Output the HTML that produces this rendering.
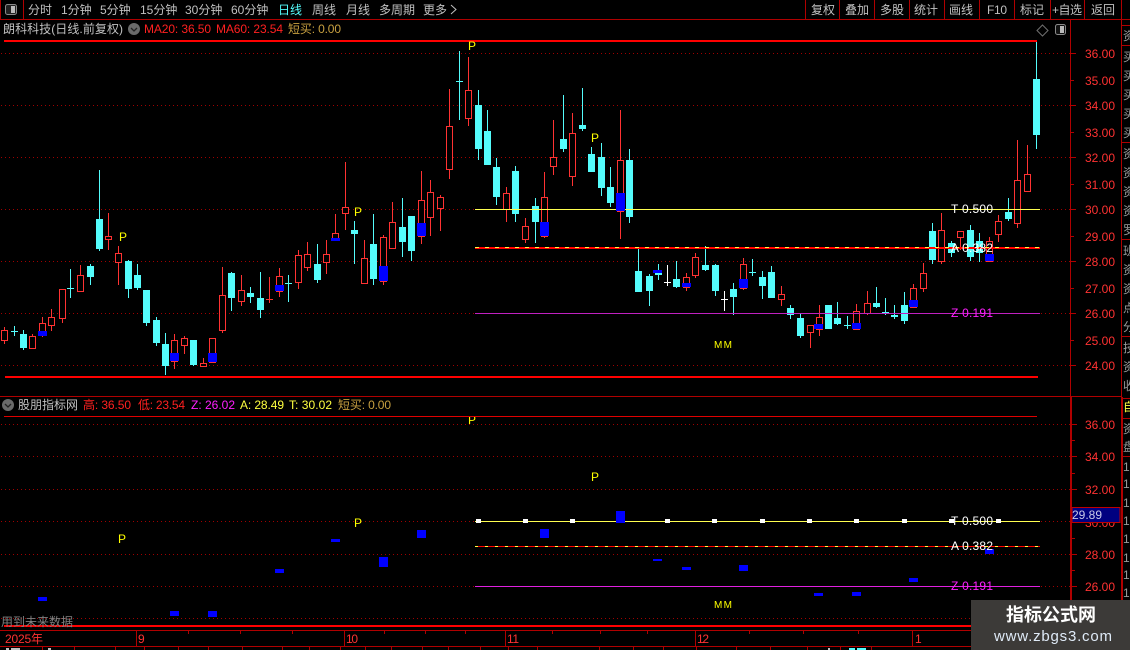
<!DOCTYPE html>
<html>
<head>
<meta charset="utf-8">
<style>
html,body{margin:0;padding:0;background:#000;width:1130px;height:650px;overflow:hidden}
svg{display:block;position:absolute;left:0;top:0}
text{font-family:"Liberation Sans","WenQuanYi Zen Hei","Noto Sans CJK SC",sans-serif;font-size:12px;fill:#c0c0c0}
.ax{fill:#ff3232}
.cj{font-family:"WenQuanYi Zen Hei","Noto Sans CJK SC",sans-serif}
</style>
</head>
<body>
<svg width="1130" height="650" viewBox="0 0 1130 650" xmlns="http://www.w3.org/2000/svg">
<defs><clipPath id="lp"><rect x="0" y="417" width="1070" height="210"/></clipPath></defs>
<rect width="1130" height="650" fill="#000"/>
<g shape-rendering="crispEdges">
<!-- frames -->
<path d="M0.5 0V19M0 19.5H1130M0 396.5H1121M0 630.5H971M0 646.5H971M23.5 0V19M805.5 0V19M839.5 0V19M874.5 0V19M909.5 0V19M944.5 0V19M979.5 0V19M1014.5 0V19M1050.5 0V19M1084.5 0V19M1070.5 19V397M1121.5 0V650M1121 25.5H1130M1121 45.5H1130M1121 142.5H1130M1121 239.5H1130M1121 336.5H1130M1121 398.5H1130M1121 418.5H1130M1121 456.5H1130M136.5 630V646M344.5 630V646M505.5 630V646M695.5 630V646M912.5 630V646M188.5 630V634M240.5 630V634M292.5 630V634M384.5 630V634M425.5 630V634M465.5 630V634M552.5 630V634M600.5 630V634M647.5 630V634M749.5 630V634M803.5 630V634M858.5 630V634M42.5 646V650M74.5 646V650M115.5 646V650M144.5 646V650M178.5 646V650M208.5 646V650M242.5 646V650M282.5 646V650M309.5 646V650M340.5 646V650M365.5 646V650M391.5 646V650M422.5 646V650M448.5 646V650M480.5 646V650M508.5 646V650M537.5 646V650M599.5 646V650M633.5 646V650M663.5 646V650M696.5 646V650M736.5 646V650M770.5 646V650M807.5 646V650M840.5 646V650M871.5 646V650" stroke="#b00000" fill="none"/>
<rect x="1070" y="397" width="2" height="253" fill="#b00000"/>
<rect x="1121" y="397" width="2" height="253" fill="#b00000"/>
<!-- axis ticks -->
<path d="M1071 53.5H1076M1071 105.5H1076M1071 157.5H1076M1071 209.5H1076M1071 261.5H1076M1071 313.5H1076M1071 365.5H1076M1071 80.5H1074M1071 132.5H1074M1071 184.5H1074M1071 236.5H1074M1071 288.5H1074M1071 340.5H1074M1072 424.5H1077M1072 456.5H1077M1072 489.5H1077M1072 554.5H1077M1072 586.5H1077M1072 440.5H1075M1072 473.5H1075M1072 538.5H1075M1072 570.5H1075M1072 602.5H1075" stroke="#b00000" fill="none"/>
<!-- grids -->
<path d="M1 53.5H1070M1 105.5H1070M1 157.5H1070M1 209.5H1070M1 261.5H1070M1 313.5H1070M1 365.5H1070M1 424.5H1070M1 456.5H1070M1 489.5H1070M1 521.5H1070M1 554.5H1070M1 586.5H1070M1 618.5H1070" stroke="#a00000" stroke-dasharray="1 3" fill="none"/>
<!-- red wicks -->
<path stroke="#ff3232" fill="none" d="M4.5 327V344M32.5 334V348M42.5 317V337M51.5 309V331M62.5 289V323M80.5 265V292M108.5 213V250M118.5 246V285M174.5 334V369M184.5 336V354M203.5 358V366M212.5 338V363M222.5 267V333M241.5 275V306M269.5 277V303M266 299.5H273M279.5 268V297M298.5 250V289M307.5 242V271M326.5 240V274M335.5 214V239M345.5 162V230M364.5 240V283M383.5 235V285M392.5 202V248M421.5 171V244M430.5 180V236M440.5 195V231M449.5 89V179M468.5 57V126M506.5 187V222M525.5 218V243M544.5 172V238M553.5 120V175M572.5 113V186M620.5 110V239M686.5 273V291M695.5 253V278M743.5 258V290M781.5 286V306M810.5 325V348M819.5 305V336M856.5 304V329M867.5 291V315M913.5 284V308M923.5 263V292M941.5 213V264M960.5 231V250M989.5 237V261M998.5 215V242M1017.5 140V228M1027.5 145V191"/>
<!-- red bodies -->
<g stroke="#ff3232" fill="#000">
<rect x="1.5" y="330.5" width="6" height="10"/><rect x="29.5" y="336.5" width="6" height="12"/><rect x="39.5" y="323.5" width="6" height="9"/><rect x="48.5" y="317.5" width="6" height="8"/><rect x="59.5" y="289.5" width="6" height="29"/><rect x="77.5" y="275.5" width="6" height="16"/><rect x="105.5" y="236.5" width="6" height="3"/><rect x="115.5" y="253.5" width="6" height="9"/><rect x="171.5" y="340.5" width="6" height="21"/><rect x="181.5" y="338.5" width="6" height="7"/><rect x="200.5" y="363.5" width="6" height="3"/><rect x="209.5" y="338.5" width="6" height="24"/><rect x="219.5" y="295.5" width="6" height="35"/><rect x="238.5" y="290.5" width="6" height="11"/><rect x="276.5" y="276.5" width="6" height="15"/><rect x="295.5" y="255.5" width="6" height="27"/><rect x="304.5" y="254.5" width="6" height="13"/><rect x="323.5" y="254.5" width="6" height="8"/><rect x="332.5" y="233.5" width="6" height="6"/><rect x="342.5" y="207.5" width="6" height="6"/><rect x="361.5" y="258.5" width="6" height="25"/><rect x="380.5" y="237.5" width="6" height="44"/><rect x="389.5" y="222.5" width="6" height="26"/><rect x="418.5" y="200.5" width="6" height="36"/><rect x="427.5" y="192.5" width="6" height="25"/><rect x="437.5" y="197.5" width="6" height="11"/><rect x="446.5" y="126.5" width="6" height="43"/><rect x="465.5" y="90.5" width="6" height="28"/><rect x="503.5" y="193.5" width="6" height="16"/><rect x="522.5" y="226.5" width="6" height="13"/><rect x="541.5" y="197.5" width="6" height="39"/><rect x="550.5" y="157.5" width="6" height="9"/><rect x="569.5" y="133.5" width="6" height="43"/><rect x="617.5" y="160.5" width="6" height="51"/><rect x="683.5" y="277.5" width="6" height="10"/><rect x="692.5" y="257.5" width="6" height="18"/><rect x="740.5" y="264.5" width="6" height="24"/><rect x="778.5" y="294.5" width="6" height="5"/><rect x="807.5" y="325.5" width="6" height="7"/><rect x="816.5" y="317.5" width="6" height="12"/><rect x="853.5" y="311.5" width="6" height="18"/><rect x="864.5" y="303.5" width="6" height="10"/><rect x="910.5" y="288.5" width="6" height="19"/><rect x="920.5" y="273.5" width="6" height="15"/><rect x="938.5" y="230.5" width="6" height="31"/><rect x="957.5" y="231.5" width="6" height="6"/><rect x="986.5" y="241.5" width="6" height="20"/><rect x="995.5" y="221.5" width="6" height="13"/><rect x="1014.5" y="180.5" width="6" height="43"/><rect x="1024.5" y="174.5" width="6" height="17"/>
</g>
<!-- cyan wicks -->
<path stroke="#54fcfc" fill="none" d="M14.5 326V336M11 331.5H18M23.5 330V350M70.5 269V298M67 288.5H74M90.5 264V285M99.5 170V251M128.5 260V298M137.5 264V290M146.5 290V326M156.5 317V346M165.5 333V375M193.5 340V366M231.5 272V311M250.5 287V303M260.5 272V318M288.5 275V302M285 283.5H292M317.5 244V283M354.5 221V264M373.5 214V285M402.5 198V257M411.5 216V261M459.5 51V120M456 81.5H463M478.5 90V160M487.5 110V165M496.5 158V205M515.5 166V222M535.5 198V243M563.5 95V152M582.5 88V131M591.5 147V172M601.5 143V196M610.5 167V207M629.5 149V223M638.5 249V292M649.5 274V306M658.5 264V280M676.5 261V288M705.5 246V271M715.5 264V296M733.5 283V315M752.5 259V276M749 272.5H756M762.5 271V299M771.5 266V298M790.5 305V319M800.5 314V338M828.5 305V329M837.5 302V325M847.5 316V329M844 325.5H851M876.5 287V308M885.5 298V315M882 312.5H889M894.5 305V319M904.5 292V324M932.5 223V264M951.5 241V257M970.5 225V261M979.5 233V262M1008.5 198V221M1036.5 41V149"/>
<path fill="#54fcfc" d="M20 334H27V348H20zM87 266H94V277H87zM96 219H103V249H96zM125 261H132V289H125zM134 275H141V288H134zM143 290H150V323H143zM153 320H160V343H153zM162 344H169V366H162zM190 340H197V365H190zM228 273H235V298H228zM247 293H254V297H247zM257 298H264V310H257zM314 264H321V280H314zM351 230H358V234H351zM370 244H377V279H370zM399 227H406V242H399zM408 216H415V251H408zM475 105H482V149H475zM484 131H491V165H484zM493 167H500V197H493zM512 171H519V214H512zM532 206H539V222H532zM560 139H567V149H560zM579 125H586V129H579zM588 154H595V172H588zM598 157H605V188H598zM607 187H614V203H607zM626 160H633V217H626zM635 271H642V292H635zM646 276H653V291H646zM655 273H662V275H655zM673 279H680V287H673zM702 265H709V270H702zM712 265H719V291H712zM730 289H737V297H730zM759 277H766V286H759zM768 272H775V298H768zM787 308H794V315H787zM797 318H804V336H797zM825 305H832V329H825zM834 318H841V324H834zM873 303H880V307H873zM891 315H898V317H891zM901 305H908V321H901zM929 231H936V260H929zM948 243H955V253H948zM967 230H974V257H967zM976 241H983V253H976zM1005 212H1012V219H1005zM1033 79H1040V135H1033z"/>
<!-- white crosses -->
<path stroke="#fff" fill="none" d="M667.5 265V286M664 282.5H671M724.5 291V311M721 299.5H728"/>
<!-- top panel lines -->
<rect x="4" y="40" width="1033" height="2" fill="#ff0000"/>
<rect x="5" y="376" width="1033" height="2" fill="#ff0000"/>
<rect x="475" y="209" width="565" height="1" fill="#ffff50"/>
<rect x="475" y="247" width="565" height="2" fill="#ff0000"/>
<path d="M475 247.5H1040" stroke="#ffff40" stroke-dasharray="4 6" fill="none"/>
<rect x="475" y="313" width="565" height="1" fill="#c020c0"/>
<!-- top blue -->
<path fill="#0000ff" d="M38 331H47V336H38zM170 353H179V361H170zM208 353H217V362H208zM275 285H284V291H275zM331 238H340V241H331zM379 266H388V281H379zM417 223H426V236H417zM540 222H549V236H540zM616 193H625V211H616zM653 270H662V273H653zM682 283H691V287H682zM739 279H748V288H739zM814 324H823V329H814zM852 323H861V329H852zM909 300H918V307H909zM985 254H994V261H985z"/>
<!-- lower panel lines -->
<rect x="4" y="416" width="1033" height="1" fill="#e00000"/>
<rect x="4" y="625" width="1126" height="2" fill="#ff0000"/>
<rect x="475" y="521" width="565" height="1" fill="#ffff50"/>
<rect x="475" y="546" width="565" height="1" fill="#ff0000"/>
<path d="M475 546.5H1040" stroke="#ffff40" stroke-dasharray="3 7" fill="none"/>
<rect x="475" y="586" width="565" height="1" fill="#e020e0"/>
<path fill="#fff" d="M476 519H481V523H476zM523 519H528V523H523zM570 519H575V523H570zM665 519H670V523H665zM712 519H717V523H712zM760 519H765V523H760zM807 519H812V523H807zM854 519H859V523H854zM902 519H907V523H902zM949 519H954V523H949zM996 519H1001V523H996z"/>
<path fill="#0000ff" d="M38 597H47V601H38zM170 611H179V616H170zM208 611H217V617H208zM275 569H284V573H275zM331 539H340V542H331zM379 557H388V567H379zM417 530H426V538H417zM540 529H549V538H540zM616 511H625V523H616zM653 559H662V561H653zM682 567H691V570H682zM739 565H748V571H739zM814 593H823V596H814zM852 592H861V596H852zM909 578H918V582H909zM985 549H994V554H985z"/>
<!-- small bits in bottom row -->
<path fill="#c0c0c0" d="M6 648H9V650H6zM11 648H20V650H11zM48 648H51V650H48zM828 648H830V650H828z"/>
<path fill="#54fcfc" d="M849 648H855V650H849zM857 648H866V650H857z"/>
</g>
<!-- icons -->
<rect x="5.5" y="4.5" width="11" height="10" rx="2" fill="#222" stroke="#8a8a8a"/><rect x="11" y="6" width="4" height="7" fill="#bbb"/>
<rect x="1055.5" y="24.5" width="10" height="10" rx="2" fill="#111" stroke="#8a8a8a"/><rect x="1060" y="26" width="4" height="7" fill="#bbb"/>
<path d="M1042.5 25L1048 30.5L1042.5 36L1037 30.5Z" fill="none" stroke="#707070"/>
<circle cx="134" cy="29" r="6" fill="#6a6a6a"/><path d="M131 28l3 3 3-3" fill="none" stroke="#222" stroke-width="1.3"/>
<circle cx="8" cy="405" r="6" fill="#6a6a6a"/><path d="M5 404l3 3 3-3" fill="none" stroke="#222" stroke-width="1.3"/>
<!-- menu -->
<text x="28" y="14">分时</text>
<text x="61" y="14">1分钟</text>
<text x="100" y="14">5分钟</text>
<text x="140" y="14">15分钟</text>
<text x="185" y="14">30分钟</text>
<text x="231" y="14">60分钟</text>
<text x="278" y="14" style="fill:#54fcfc">日线</text>
<text x="312" y="14">周线</text>
<text x="346" y="14">月线</text>
<text x="379" y="14">多周期</text>
<text x="423" y="14">更多</text>
<path d="M451 5l5 4.5-5 4.5" fill="none" stroke="#c0c0c0"/>
<text x="811" y="14">复权</text>
<text x="845" y="14">叠加</text>
<text x="880" y="14">多股</text>
<text x="914" y="14">统计</text>
<text x="949" y="14">画线</text>
<text x="987" y="14" textLength="20">F10</text>
<text x="1020" y="14">标记</text>
<text x="1052" y="14" textLength="30">+自选</text>
<text x="1091" y="14">返回</text>
<!-- title -->
<text x="3" y="33" textLength="120">朗科科技(日线.前复权)</text>
<text x="144" y="33" style="fill:#ff2020" textLength="67">MA20: 36.50</text>
<text x="216" y="33" style="fill:#ff2020" textLength="67">MA60: 23.54</text>
<text x="288" y="33" style="fill:#c8a040" textLength="53">短买: 0.00</text>
<text x="18" y="409" textLength="60">股朋指标网</text>
<text x="83" y="409" style="fill:#ff2020" textLength="48">高: 36.50</text>
<text x="138" y="409" style="fill:#ff2020" textLength="47">低: 23.54</text>
<text x="191" y="409" style="fill:#ff20ff" textLength="44">Z: 26.02</text>
<text x="240" y="409" style="fill:#ffff40" textLength="44">A: 28.49</text>
<text x="289" y="409" style="fill:#ffff40" textLength="43">T: 30.02</text>
<text x="338" y="409" style="fill:#c8a040" textLength="53">短买: 0.00</text>
<!-- P / MM -->
<g style="font-size:12px">
<text x="119" y="241" style="fill:#ffff00">P</text>
<text x="354" y="216" style="fill:#ffff00">P</text>
<text x="468" y="50" style="fill:#ffff00">P</text>
<text x="591" y="142" style="fill:#ffff00">P</text>
<text x="714" y="348" style="fill:#ffff00;font-size:10px" textLength="18">MM</text>
<text x="118" y="543" style="fill:#ffff00">P</text>
<text x="354" y="527" style="fill:#ffff00">P</text>
<text x="468" y="424" style="fill:#ffff00" clip-path="url(#lp)">P</text>
<text x="591" y="481" style="fill:#ffff00">P</text>
<text x="714" y="608" style="fill:#ffff00;font-size:10px" textLength="18">MM</text>
</g>
<text x="951" y="213" style="fill:#fff" textLength="42">T 0.500</text>
<text x="951" y="252" style="fill:#fff" textLength="42">A 0.382</text>
<text x="951" y="317" style="fill:#ff20ff" textLength="42">Z 0.191</text>
<text x="951" y="525" style="fill:#fff" textLength="42">T 0.500</text>
<text x="951" y="550" style="fill:#fff" textLength="42">A 0.382</text>
<text x="951" y="590" style="fill:#ff20ff" textLength="42">Z 0.191</text>
<text x="1" y="626" style="fill:#808080" textLength="72">用到未来数据</text>
<!-- axis labels -->
<g>
<text class="ax" x="1085" y="58" textLength="30">36.00</text>
<text class="ax" x="1085" y="85" textLength="30">35.00</text>
<text class="ax" x="1085" y="110" textLength="30">34.00</text>
<text class="ax" x="1085" y="137" textLength="30">33.00</text>
<text class="ax" x="1085" y="162" textLength="30">32.00</text>
<text class="ax" x="1085" y="189" textLength="30">31.00</text>
<text class="ax" x="1085" y="214" textLength="30">30.00</text>
<text class="ax" x="1085" y="241" textLength="30">29.00</text>
<text class="ax" x="1085" y="266" textLength="30">28.00</text>
<text class="ax" x="1085" y="293" textLength="30">27.00</text>
<text class="ax" x="1085" y="318" textLength="30">26.00</text>
<text class="ax" x="1085" y="345" textLength="30">25.00</text>
<text class="ax" x="1085" y="370" textLength="30">24.00</text>
<text class="ax" x="1085" y="429" textLength="30">36.00</text>
<text class="ax" x="1085" y="461" textLength="30">34.00</text>
<text class="ax" x="1085" y="494" textLength="30">32.00</text>
<text class="ax" x="1085" y="527" textLength="30">30.00</text>
<text class="ax" x="1085" y="559" textLength="30">28.00</text>
<text class="ax" x="1085" y="591" textLength="30">26.00</text>
</g>
<rect x="1072" y="507.5" width="48" height="15" fill="#000080" stroke="#c00000"/>
<text x="1072" y="519" style="fill:#c8c8e8" textLength="30">29.89</text>
<!-- x axis -->
<text class="ax" x="5" y="643" textLength="38">2025年</text>
<text class="ax" x="138" y="643">9</text>
<text class="ax" x="346" y="643" textLength="12">10</text>
<text class="ax" x="507" y="643" textLength="12">11</text>
<text class="ax" x="697" y="643" textLength="12">12</text>
<text class="ax" x="915" y="643">1</text>
<!-- right clipped column -->
<g style="fill-opacity:.8">
<text x="1123" y="40">资</text>
<text x="1123" y="61">买</text><text x="1123" y="80">买</text><text x="1123" y="99">买</text><text x="1123" y="118">买</text><text x="1123" y="137">买</text>
<text x="1123" y="158">资</text><text x="1123" y="177">资</text><text x="1123" y="196">资</text><text x="1123" y="215">资</text><text x="1123" y="234">罗</text>
<text x="1123" y="255">班</text><text x="1123" y="274">资</text><text x="1123" y="293">资</text><text x="1123" y="312">点</text><text x="1123" y="331">分</text>
<text x="1123" y="352">技</text><text x="1123" y="371">资</text><text x="1123" y="390">收</text>
<text x="1123" y="433">资</text><text x="1123" y="451">盘</text>
<text x="1123" y="471">1</text><text x="1123" y="488">1</text><text x="1123" y="507">1</text><text x="1123" y="525">1</text><text x="1123" y="543">1</text><text x="1123" y="562">1</text><text x="1123" y="579">1</text><text x="1123" y="597">1</text>
</g>
<text x="1123" y="411" style="fill:#ffff40">自</text>
<!-- watermark -->
<rect x="971" y="600" width="159" height="50" fill="#3c3a38"/>
<text x="1006" y="621" style="fill:#fff;font-size:18px;font-weight:bold" textLength="90">指标公式网</text>
<text x="994" y="641" style="fill:#dfeaf7;font-size:15px" textLength="118">www.zbgs3.com</text>
</svg>
</body>
</html>
